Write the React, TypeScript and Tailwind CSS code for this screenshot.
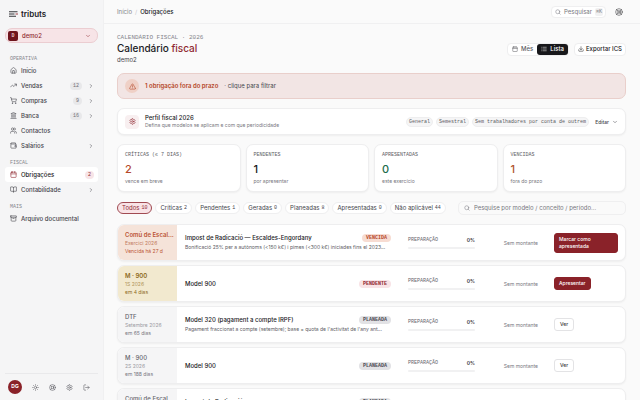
import { useState } from 'react';
import clsx from 'clsx';
import {
  Archive,
  BookOpen,
  Calendar,
  ChevronDown,
  ChevronRight,
  Download,
  House,
  Landmark,
  LifeBuoy,
  List,
  LogOut,
  Search,
  Settings,
  ShoppingCart,
  Sun,
  TrendingUp,
  TriangleAlert,
  Users,
  Wallet,
  type LucideIcon,
} from 'lucide-react';

interface NavItem {
  label: string;
  icon: LucideIcon;
  count?: number;
  expandable?: boolean;
  active?: boolean;
}

interface Obligation {
  code: string;
  period: string;
  due: string;
  title: string;
  note?: string;
  status: string;
  action: string;
  tone: 'overdue' | 'pending' | 'planned';
}

const sections: { title: string; items: NavItem[] }[] = [
  {
    title: 'OPERATIVA',
    items: [
      { label: 'Início', icon: House },
      { label: 'Vendas', icon: TrendingUp, count: 12, expandable: true },
      { label: 'Compras', icon: ShoppingCart, count: 9, expandable: true },
      { label: 'Banca', icon: Landmark, count: 16, expandable: true },
      { label: 'Contactos', icon: Users },
      { label: 'Salários', icon: Wallet, expandable: true },
    ],
  },
  {
    title: 'FISCAL',
    items: [
      { label: 'Obrigações', icon: Calendar, count: 2, active: true },
      { label: 'Contabilidade', icon: BookOpen, expandable: true },
    ],
  },
  {
    title: 'MAIS',
    items: [{ label: 'Arquivo documental', icon: Archive }],
  },
];

const stats = [
  { label: 'CRÍTICAS (≤ 7 DIAS)', value: 2, hint: 'vence em breve', color: 'text-[#b5482a]' },
  { label: 'PENDENTES', value: 1, hint: 'por apresentar', color: 'text-[#18181b]' },
  { label: 'APRESENTADAS', value: 0, hint: 'este exercício', color: 'text-[#1c6b4a]' },
  { label: 'VENCIDAS', value: 1, hint: 'fora do prazo', color: 'text-[#b0532f]' },
];

const filters = [
  { label: 'Todos', count: 10 },
  { label: 'Críticas', count: 2 },
  { label: 'Pendentes', count: 1 },
  { label: 'Geradas', count: 0 },
  { label: 'Planeadas', count: 8 },
  { label: 'Apresentadas', count: 0 },
  { label: 'Não aplicável', count: 44 },
];

const obligations: Obligation[] = [
  {
    code: 'Comú de Escal...',
    period: 'Exercici 2026',
    due: 'Vencida há 27 d',
    title: 'Impost de Radicació — Escaldes-Engordany',
    note: 'Bonificació 25% per a autònoms (<150 k€) i pimes (<300 k€) iniciades fins el 2023...',
    status: 'VENCIDA',
    action: 'Marcar como apresentada',
    tone: 'overdue',
  },
  {
    code: 'M · 900',
    period: '1S 2026',
    due: 'em 4 dias',
    title: 'Model 900',
    status: 'PENDENTE',
    action: 'Apresentar',
    tone: 'pending',
  },
  {
    code: 'DTF',
    period: 'Setembre 2026',
    due: 'em 65 dias',
    title: 'Model 320 (pagament a compte IRPF)',
    note: "Pagament fraccionat a compte (setembre); base = quota de l'activitat de l'any ant...",
    status: 'PLANEADA',
    action: 'Ver',
    tone: 'planned',
  },
  {
    code: 'M · 900',
    period: '2S 2026',
    due: 'em 188 dias',
    title: 'Model 900',
    status: 'PLANEADA',
    action: 'Ver',
    tone: 'planned',
  },
  {
    code: 'Comú de Escal...',
    period: 'Exercici 2027',
    due: 'em 338 dias',
    title: 'Impost de Radicació',
    note: 'Bonificació 25% per a autònoms',
    status: 'PLANEADA',
    action: 'Ver',
    tone: 'planned',
  },
];

const mono = "font-['Liberation_Mono',monospace] text-[5px] leading-[6px]";

const tones = {
  overdue: {
    cell: 'bg-[#f5e3d9] text-[#c27a60]',
    code: 'font-semibold text-[#bb5535]',
    due: 'text-[#bb5535]',
    badge: 'bg-[#f7dcd2] text-[#b5482a]',
  },
  pending: {
    cell: 'bg-[#f2e9cf] text-[#b0955a]',
    code: 'font-semibold text-[#8d6a1c]',
    due: 'text-[#8d6a1c]',
    badge: 'bg-[#f8e3e6] text-[#8f2830]',
  },
  planned: {
    cell: 'bg-[#f5f5f6] text-[#9b9ba2]',
    code: 'font-medium text-[#66666d]',
    due: 'text-[#77777e]',
    badge: 'bg-[#e2e2e5] text-[#4b4b52]',
  },
};

function Sidebar() {
  return (
    <aside className="flex w-[104px] shrink-0 flex-col border-r border-[#f0f0f1] bg-[#f5f5f6] px-[5px]">
      <a href="#" className="flex h-7 items-center gap-[3px] pl-1">
        <svg viewBox="0 0 18 12" className="h-[6px] w-[9px]" fill="none" strokeWidth="1.8">
          <path d="M0 1.5h17M0 6h11M0 10.5h14" stroke="#202024" />
          <path d="M13 6h5" stroke="#8f2830" />
        </svg>
        <span className="text-[8px] leading-[10px] font-semibold text-[#202024]">tributs</span>
      </a>

      <button className="flex h-[15px] items-center gap-1 rounded-[7px] border border-[#ebcdd1] bg-[#f7e4e7] pr-[6px] pl-[2px] text-[#8f2830]">
        <span className={clsx(mono, 'flex size-[10px] items-center justify-center rounded-[2px] bg-[#6e151d] font-bold text-[#e7bfc3]')}>
          D
        </span>
        <span className="text-[6px] leading-[8px] font-medium">demo2</span>
        <ChevronDown className="ml-auto size-[6px]" />
      </button>

      <nav className="pt-[6px]">
        {sections.map((section) => (
          <div key={section.title}>
            <h2 className={clsx(mono, 'pt-[7px] pb-px pl-[5px] text-[#85858c]')}>{section.title}</h2>
            {section.items.map(({ label, icon: Icon, count, expandable, active }) => (
              <a
                key={label}
                href="#"
                className={clsx(
                  'flex h-[15px] items-center gap-1 rounded-[3px] pr-1 pl-[5px] text-[6px] leading-[8px] font-medium',
                  active ? 'bg-white text-[#202024]' : 'text-[#45454c]'
                )}
              >
                <Icon className={clsx('size-[7px] shrink-0', active && 'text-[#8f2830]')} />
                <span className="flex-1">{label}</span>
                {count !== undefined && (
                  <span
                    className={clsx(
                      mono,
                      'rounded-full px-[3px] py-px',
                      active ? 'bg-[#f7e4e7] text-[#8f2830]' : 'mr-[2px] bg-[#e8e8ea] text-[#6d6d74]'
                    )}
                  >
                    {count}
                  </span>
                )}
                {expandable && <ChevronRight className="size-[6px] shrink-0" />}
              </a>
            ))}
          </div>
        ))}
      </nav>

      <div className="mt-auto flex h-[27px] items-center gap-[10px] border-t border-[#e9e9eb] pl-[3px] text-[#606067]">
        <button className="flex size-[14px] items-center justify-center rounded-full bg-[#8a2229] text-[5px] font-bold text-white">
          DG
        </button>
        <button aria-label="Tema"><Sun className="size-[7px]" /></button>
        <button aria-label="Ajuda"><LifeBuoy className="size-[7px]" /></button>
        <button aria-label="Definições"><Settings className="size-[7px]" /></button>
        <button aria-label="Sair"><LogOut className="size-[7px]" /></button>
      </div>
    </aside>
  );
}

function ObligationRow({ item }: { item: Obligation }) {
  const tone = tones[item.tone];

  return (
    <li className="grid h-[37px] shrink-0 grid-cols-[59px_minmax(0,1fr)_84px_63px_80px] items-center overflow-hidden rounded-[7px] border border-[#eeeeef] bg-white pr-[7px] shadow-xs">
      <div className={clsx('flex h-full flex-col justify-center gap-px pl-[7px] text-[5px] leading-[7px] whitespace-nowrap', tone.cell)}>
        <p className={clsx('text-[6px] leading-[8px]', tone.code)}>{item.code}</p>
        <p>{item.period}</p>
        <p className={tone.due}>{item.due}</p>
      </div>
      <div className="pl-2">
        <div className="flex items-center justify-between">
          <h3 className="text-[6px] leading-[9px] font-medium text-[#202024]">{item.title}</h3>
          <span className={clsx(mono, 'rounded-full px-1 py-px font-bold', tone.badge)}>{item.status}</span>
        </div>
        {item.note && <p className="mt-px text-[5px] leading-[9px] whitespace-nowrap text-[#5c5c63]">{item.note}</p>}
      </div>
      <div className="pl-[17px]">
        <div className="flex items-center justify-between">
          <span className={clsx(mono, 'text-[#66666d]')}>PREPARAÇÃO</span>
          <span className="text-[5px] leading-[6px] font-semibold text-[#35353a]">0%</span>
        </div>
        <div className="mt-1 h-[2px] rounded-full bg-[#f1f1f2]" />
      </div>
      <span className="text-right text-[5px] leading-[8px] whitespace-nowrap text-[#77777e]">Sem montante</span>
      <div className="flex pl-4">
        <button
          className={clsx(
            'rounded-[3px] border px-1 py-[2px] text-left text-[5px] leading-[7px] font-medium',
            item.tone === 'planned' ? 'border-[#e3e3e5] bg-white px-[5px] text-[#35353a]' : 'border-[#8a2229] bg-[#8a2229] text-white',
            item.tone === 'overdue' && 'w-full pr-5'
          )}
        >
          {item.action}
        </button>
      </div>
    </li>
  );
}

export default function App() {
  const [filter, setFilter] = useState('Todos');

  return (
    <div className="flex h-screen overflow-hidden bg-[#fafafa] font-['Inter',sans-serif] text-[#202024]">
      <Sidebar />

      <div className="flex min-w-0 flex-1 flex-col">
        <header className="flex h-6 shrink-0 items-center justify-between border-b border-[#f0f0f1] pr-[17px] pl-[13px] text-[6px] leading-[8px]">
          <nav className="flex gap-[3px]">
            <a href="#" className="text-[#85858c]">Início</a>
            <span className="text-[#c5c5ca]">/</span>
            <span className="font-medium">Obrigações</span>
          </nav>
          <div className="flex items-center gap-[9px]">
            <button className="flex h-3 w-[55px] items-center gap-[3px] rounded-[4px] border border-[#efeff0] bg-white px-[3px] text-[#77777e]">
              <Search className="size-[6px] shrink-0" />
              Pesquisar
              <kbd className={clsx(mono, 'ml-auto rounded-[2px] bg-[#f1f1f2] px-px py-px')}>⌘K</kbd>
            </button>
            <button aria-label="Ajuda"><LifeBuoy strokeWidth={1.5} className="size-[8px]" /></button>
          </div>
        </header>

        <main className="flex min-h-0 flex-1 flex-col overflow-hidden pt-[10px] pr-[14px] pl-[13px]">
          <div className="flex shrink-0 items-center justify-between">
            <div>
              <p className="font-['Liberation_Mono',monospace] text-[6px] leading-[7px] text-[#85858c]">CALENDÁRIO FISCAL · 2026</p>
              <h1 className="text-[10px] leading-[15px] font-medium">
                Calendário <span className="text-[#8f2830]">fiscal</span>
              </h1>
              <p className="text-[6px] leading-[8px] text-[#45454c]">demo2</p>
            </div>
            <div className="flex items-center gap-[5px] text-[6px] leading-[8px] font-medium">
              <div className="flex rounded-[4px] border border-[#eeeeef] bg-white">
                <button className="flex h-[11px] items-center gap-[3px] px-1 text-[#5c5c63]">
                  <Calendar className="size-[6px]" />
                  Mês
                </button>
                <button className="flex h-[11px] items-center gap-[3px] rounded-[3px] bg-[#18181b] px-1 text-white">
                  <List className="size-[6px]" />
                  Lista
                </button>
              </div>
              <button className="flex h-[13px] items-center gap-[2px] rounded-[4px] border border-[#eeeeef] bg-white px-[3px]">
                <Download className="size-[6px]" />
                Exportar ICS
              </button>
            </div>
          </div>

          <button className="mt-[9px] flex h-[26px] shrink-0 items-center gap-[6px] rounded-[7px] border border-[#e9cfcb] bg-[#f2e5e4] px-[7px] text-[6px] leading-[8px]">
            <span className="flex size-[14px] items-center justify-center rounded-full bg-[#efd0c6] text-[#b5482a]">
              <TriangleAlert className="size-[7px]" />
            </span>
            <span className="font-semibold text-[#b5482a]">1 obrigação fora do prazo</span>
            <span className="text-[#45454c]">· clique para filtrar</span>
          </button>

          <section className="mt-[9px] flex h-[27px] shrink-0 items-center gap-[6px] rounded-[7px] border border-[#eeeeef] bg-white px-[7px] shadow-xs">
            <span className="flex size-[14px] items-center justify-center rounded-[4px] bg-[#f8eff0] text-[#8f2830]">
              <Settings className="size-[7px]" />
            </span>
            <div>
              <h2 className="text-[6px] leading-[8px] font-medium">Perfil fiscal 2026</h2>
              <p className="text-[5px] leading-[7px] text-[#77777e]">Defina que modelos se aplicam e com que periodicidade</p>
            </div>
            <div className="ml-auto flex gap-[3px]">
              {['General', 'Semestral', 'Sem trabalhadores por conta de outrem'].map((tag) => (
                <span key={tag} className={clsx(mono, 'rounded-full border border-[#eeeeef] bg-[#f5f5f6] px-[2px] py-px text-[#5c5c63]')}>
                  {tag}
                </span>
              ))}
            </div>
            <button className="flex items-center gap-[3px] text-[5px] leading-[8px] font-medium text-[#45454c]">
              Editar
              <ChevronDown className="size-[6px]" />
            </button>
          </section>

          <section className="mt-[9px] grid shrink-0 grid-cols-4 gap-[5px]">
            {stats.map((stat) => (
              <div key={stat.label} className="h-12 rounded-[7px] border border-[#eeeeef] bg-white px-[7px] pt-[7px] shadow-xs">
                <h2 className={clsx(mono, 'text-[#5c5c63]')}>{stat.label}</h2>
                <p className={clsx('mt-[5px] text-[11px] leading-[13px] font-medium', stat.color)}>{stat.value}</p>
                <p className="mt-[2px] text-[5px] leading-[7px] text-[#77777e]">{stat.hint}</p>
              </div>
            ))}
          </section>

          <div className="mt-[9px] flex shrink-0 items-center justify-between gap-3">
            <div className="flex gap-[3px]">
              {filters.map(({ label, count }) => (
                <button
                  key={label}
                  onClick={() => setFilter(label)}
                  className={clsx(
                    'flex h-3 items-center gap-[2px] rounded-full border px-1 text-[6px] leading-[8px] whitespace-nowrap',
                    label === filter ? 'border-[#a04a52] bg-[#f8e3e6] text-[#8f2830]' : 'border-[#efeff0] bg-white text-[#45454c]'
                  )}
                >
                  {label}
                  <span className={mono}>{count}</span>
                </button>
              ))}
            </div>
            <label className="flex h-[14px] min-w-0 flex-1 items-center gap-1 rounded-[5px] border border-[#efeff0] px-[5px] text-[#77777e]">
              <Search className="size-[6px] shrink-0" />
              <input
                type="text"
                aria-label="Pesquisar obrigações"
                placeholder="Pesquise por modelo / conceito / período..."
                className="min-w-0 flex-1 text-[6px] leading-[8px] outline-none placeholder:text-[#77777e]"
              />
            </label>
          </div>

          <ul className="mt-[9px] flex flex-col gap-1">
            {obligations.map((item, i) => (
              <ObligationRow key={i} item={item} />
            ))}
          </ul>
        </main>
      </div>
    </div>
  );
}
